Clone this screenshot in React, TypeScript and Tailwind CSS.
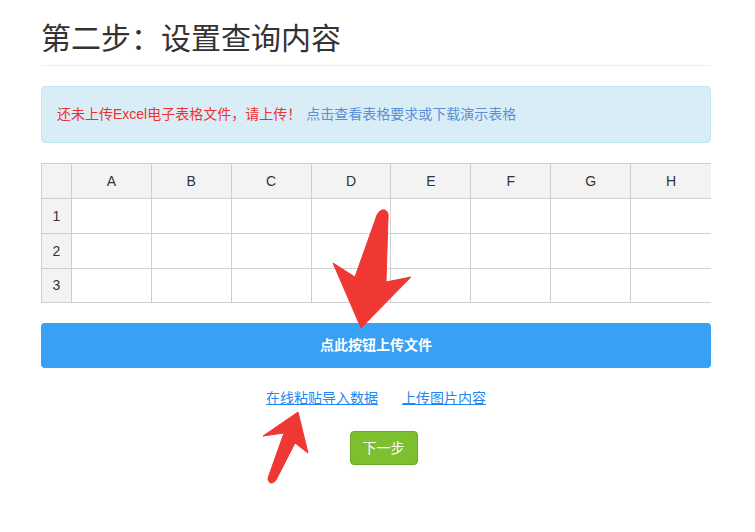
import React from "react";

const font = { fontFamily: '"Liberation Sans", "Noto Sans CJK SC", sans-serif' };
const cols = ["A", "B", "C", "D", "E", "F", "G", "H"];

export default function App() {
  return (
    <div className="w-[755px] h-[532px] bg-white overflow-hidden relative" style={font}>
      <div className="ml-[41px] w-[670px] pt-[18px]">
        <h1 className="text-[30px] leading-[42px] text-[#333] pb-[5px] border-b border-[#eee]">第二步：设置查询内容</h1>
        <div className="mt-[20px] h-[57px] bg-[#d9edf7] border border-[#bce8f1] rounded-[4px] flex items-center px-[15px] text-[14px]">
          <span className="text-[#f0302e]">还未上传Excel电子表格文件，请上传！</span>
          <span className="ml-[5px] text-[#5e8fd2]">点击查看表格要求或下载演示表格</span>
        </div>
        <div className="mt-[20px] border-t border-l border-[#cfcfcf] text-[14px] text-[#333]">
          <div className="flex h-[35px] bg-[#f3f3f3] border-b border-[#cfcfcf]">
            <div className="w-[30px] border-r border-[#cfcfcf]" />
            {cols.map((c, i) => (
              <div key={c} className={`w-[80px] flex items-center justify-center ${i < 7 ? "border-r border-[#cfcfcf]" : ""}`}>{c}</div>
            ))}
          </div>
          {[1, 2, 3].map((r) => (
            <div key={r} className={`flex ${r === 3 ? "h-[34px]" : "h-[35px]"} border-b border-[#cfcfcf]`}>
              <div className="w-[30px] bg-[#f3f3f3] border-r border-[#cfcfcf] flex items-center justify-center">{r}</div>
              {cols.map((c, i) => (
                <div key={c} className={`w-[80px] ${i < 7 ? "border-r border-[#cfcfcf]" : ""}`} />
              ))}
            </div>
          ))}
        </div>
        <div className="mt-[20px] h-[45px] bg-[#38a0f5] rounded-[4px] flex items-center justify-center text-white text-[14px] font-bold">点此按钮上传文件</div>
        <div className="mt-[20px] flex justify-center gap-[24px] text-[14px] text-[#1e88f0] underline">
          <span>在线粘贴导入数据</span>
          <span>上传图片内容</span>
        </div>
        <div className="mt-[22px] flex justify-center pl-[15px]">
          <div className="w-[68px] h-[34px] bg-[#7cbf2f] border border-[#6aa828] rounded-[4px] flex items-center justify-center text-white text-[14px]">下一步</div>
        </div>
      </div>
      <svg className="absolute left-0 top-0 pointer-events-none" width="755" height="532">
        <path d="M377 215 Q380 209 385 210 Q389 212 388 218 L386 282 L411 277 L361 328 L333 263 L355 277 Z" fill="#ef3834" stroke="#ef3834" strokeWidth="1" strokeLinejoin="round" />
        <path d="M298 412 L263 436 L284 433 L268 478 Q268 483 272 483 Q275 482 276 480 L295 443 L308 453 Z" fill="#ef3834" stroke="#ef3834" strokeWidth="1" strokeLinejoin="round" />
      </svg>
    </div>
  );
}
